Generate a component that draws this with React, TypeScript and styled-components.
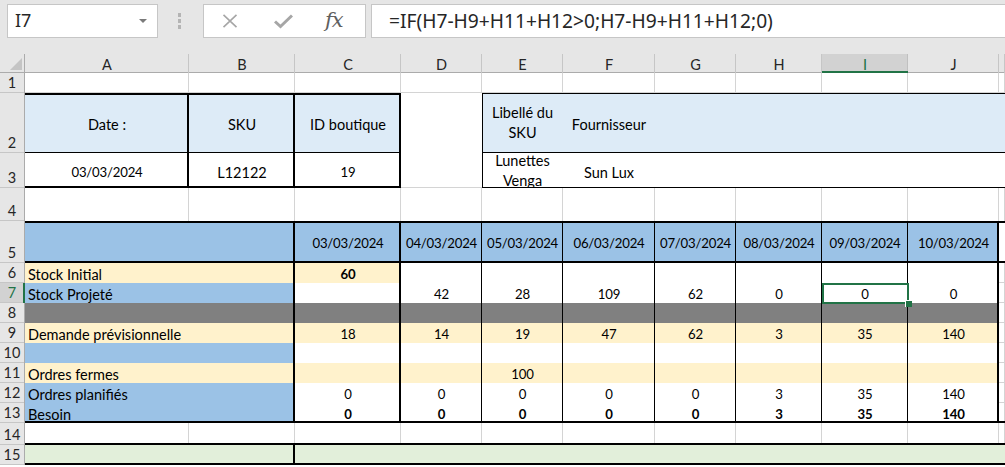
import React from 'react'
import styled, { createGlobalStyle } from 'styled-components'

const GlobalStyle = createGlobalStyle`
  html, body {
    margin: 0;
    padding: 0;
    background: #ffffff;
    overflow: hidden;
  }
  body {
    font-family: Lato, "Liberation Sans", sans-serif;
  }
`

const BLUE = '#9bc2e6'
const PALE = '#ddebf7'
const YELLOW = '#fff2cc'
const GREY = '#808080'
const GREEN = '#e2efda'
const GRID = '#d4d4d4'
const XL = '#217346'

type Edge = 'n' | 'g' | 't' | 'T'

interface Spec {
  span?: number
  text?: string
  fill?: string
  bold?: boolean
  align?: 'left' | 'center'
  wrap?: boolean
  r?: Edge
  b?: Edge
  t?: Edge
  l?: Edge
  sel?: boolean
}

interface RowSpec {
  n: number
  h: number
  cells: Spec[]
}

// inset shadows stand in for excel borders, black ones listed first so they win over gridlines
function edges(s: Spec) {
  const out: string[] = []
  const grid: string[] = []
  const add = (kind: Edge | undefined, fn: (w: number) => string) => {
    if (!kind || kind === 'n') return
    const w = kind === 'T' ? 2 : 1
    const c = kind === 'g' ? GRID : '#000'
    ;(kind === 'g' ? grid : out).push(`${fn(w)} ${c}`)
  }
  add(s.t, w => `inset 0 ${w}px 0`)
  add(s.l, w => `inset ${w}px 0 0`)
  add(s.r, w => `inset -${w}px 0 0`)
  add(s.b, w => `inset 0 -${w}px 0`)
  const all = [...out, ...grid]
  return all.length ? all.join(', ') : 'none'
}

const Bar = styled.div`
  height: 54px;
  box-sizing: border-box;
  background: #e6e6e6;
  display: flex;
  align-items: flex-start;
  padding-top: 4px;
  overflow: hidden;
`

const NameBox = styled.div`
  margin-left: 7px;
  width: 151px;
  height: 34px;
  box-sizing: border-box;
  background: #fff;
  border: 1px solid #c6c6c6;
  display: flex;
  align-items: center;
  justify-content: space-between;
  padding: 0 10px 2px 7px;
  font: 18px "Noto Sans", "Open Sans", sans-serif;
  color: #262626;
`

const Caret = styled.span`
  width: 0;
  height: 0;
  border-left: 4px solid transparent;
  border-right: 4px solid transparent;
  border-top: 4px solid #7a7a7a;
  margin-top: 2px;
`

const Grip = styled.div`
  width: 3px;
  margin: 9px 22px 0 20px;
  display: flex;
  flex-direction: column;
  gap: 2px;
`

const Dot = styled.span`
  width: 3px;
  height: 4px;
  background: #b4b4b4;
`

const FxBox = styled.div`
  width: 163px;
  height: 34px;
  box-sizing: border-box;
  background: #fff;
  border: 1px solid #c6c6c6;
  display: flex;
  align-items: center;
  padding-left: 18px;
  gap: 36px;
`

const Fx = styled.span`
  font: italic 21px "DejaVu Serif", "Liberation Serif", serif;
  color: #606060;
  letter-spacing: -1px;
  margin-left: -4px;
  margin-bottom: 2px;
`

const Formula = styled.div`
  flex: 1;
  margin-left: 5px;
  height: 34px;
  box-sizing: border-box;
  background: #fff;
  border: 1px solid #c6c6c6;
  border-right: none;
  display: flex;
  align-items: center;
  padding: 0 0 2px 17px;
  font: 19.2px "Noto Sans", "Open Sans", sans-serif;
  color: #262626;
  white-space: nowrap;
`

const Sheet = styled.div<{ $rows: string }>`
  display: grid;
  grid-template-columns: 25px 164px 106px 106px 81px 81px 92px 81px 86px 86px 91px 1fr;
  grid-template-rows: ${p => p.$rows};
  font-size: 14.5px;
  color: #000;
`

const Corner = styled.div`
  background: #e6e6e6;
  box-shadow: inset -1px 0 0 #ababab, inset 0 -1px 0 #ababab;
  display: flex;
  align-items: flex-end;
  justify-content: flex-end;
  padding: 0 3px 3px 0;
`

const CornerMark = styled.span`
  width: 0;
  height: 0;
  border-left: 12px solid transparent;
  border-bottom: 12px solid #c4c4c4;
`

const ColHead = styled.div<{ $active?: boolean }>`
  background: ${p => (p.$active ? '#d2d2d2' : '#e6e6e6')};
  box-shadow: ${p =>
    p.$active
      ? `inset 0 -2px 0 ${XL}, inset -1px 0 0 #c0c0c0`
      : 'inset -1px 0 0 #c6c6c6, inset 0 -1px 0 #ababab'};
  color: ${p => (p.$active ? XL : '#262626')};
  display: flex;
  align-items: center;
  justify-content: center;
  padding-top: 1px;
  font-size: 14.5px;
`

const RowHead = styled.div<{ $active?: boolean }>`
  background: ${p => (p.$active ? '#d2d2d2' : '#e6e6e6')};
  box-shadow: ${p =>
    p.$active
      ? `inset -2px 0 0 ${XL}, inset 0 -1px 0 #c6c6c6`
      : 'inset -1px 0 0 #ababab, inset 0 -1px 0 #c6c6c6'};
  color: ${p => (p.$active ? XL : '#262626')};
  display: flex;
  align-items: flex-end;
  justify-content: center;
  line-height: 20px;
  padding-right: 1px;
  font-size: 14.5px;
  overflow: hidden;
`

const Cell = styled.div<{
  $span: number
  $fill: string
  $bold?: boolean
  $align?: 'left' | 'center'
  $wrap?: boolean
  $num?: boolean
  $edges: string
}>`
  grid-column: span ${p => p.$span};
  position: relative;
  background: ${p => p.$fill};
  box-shadow: ${p => p.$edges};
  display: flex;
  align-items: center;
  justify-content: ${p => (p.$align === 'left' ? 'flex-start' : 'center')};
  text-align: center;
  padding: ${p => (p.$wrap ? '0 3px' : '3px 3px 0')};
  font-size: ${p => (p.$num ? '13.2px' : '14.5px')};
  letter-spacing: ${p => (p.$num ? '-0.2px' : '0')};
  font-weight: ${p => (p.$bold ? 700 : 400)};
  white-space: ${p => (p.$wrap ? 'normal' : 'nowrap')};
  line-height: ${p => (p.$wrap ? '20px' : '17px')};
  overflow: ${p => (p.$wrap ? 'hidden' : 'visible')};
  min-width: 0;
`

const Selection = styled.span`
  position: absolute;
  z-index: 2;
  left: 0;
  top: 0;
  right: -1px;
  bottom: -1px;
  border: 2px solid ${XL};
  pointer-events: none;
`

const Handle = styled.span`
  position: absolute;
  right: -5px;
  bottom: -5px;
  width: 6px;
  height: 6px;
  background: ${XL};
  border-left: 1px solid #fff;
  border-top: 1px solid #fff;
`

const letters = ['A', 'B', 'C', 'D', 'E', 'F', 'G', 'H', 'I', 'J', 'K']
const dates = ['03/03/2024', '04/03/2024', '05/03/2024', '06/03/2024', '07/03/2024', '08/03/2024', '09/03/2024', '10/03/2024']

const blankRow = (b: Edge = 'g'): Spec[] => letters.map(() => ({ r: 'g', b }))

// rows 6-13 of the planning block: label over A:B, values C..J, K left plain
function planRow(
  label: string,
  labelFill: string,
  values: string[],
  fills: string[],
  opts: { bold?: boolean; last?: boolean; selAt?: number; boldAt?: number } = {}
): Spec[] {
  const b: Edge = opts.last ? 'T' : 'n'
  const row: Spec[] = [{ span: 2, text: label, fill: labelFill, align: 'left', r: 'T', b }]
  values.forEach((v, i) => {
    row.push({
      text: v,
      fill: fills[i],
      bold: opts.bold || opts.boldAt === i,
      r: i === 0 || i === 7 ? 'T' : 't',
      b,
      sel: opts.selAt === i,
    })
  })
  row.push({ r: 'g', b: opts.last ? 'T' : 'g' })
  return row
}

const all = (c: string) => Array(8).fill(c)

const rows: RowSpec[] = [
  { n: 1, h: 20, cells: blankRow() },
  {
    n: 2,
    h: 60,
    cells: [
      { text: 'Date :', fill: PALE, t: 'T', r: 'T', b: 't' },
      { text: 'SKU', fill: PALE, t: 'T', r: 'T', b: 't' },
      { text: 'ID boutique', fill: PALE, t: 'T', r: 'T', b: 't' },
      { r: 'n', b: 'n' },
      { text: 'Libellé du SKU', fill: PALE, wrap: true, t: 't', l: 't', b: 't' },
      { text: 'Fournisseur', fill: PALE, t: 't', b: 't' },
      { span: 5, fill: PALE, t: 't', b: 't' },
    ],
  },
  {
    n: 3,
    h: 35,
    cells: [
      { text: '03/03/2024', r: 'T', b: 'T' },
      { text: 'L12122', r: 'T', b: 'T' },
      { text: '19', r: 'T', b: 'T' },
      { r: 'n', b: 'g' },
      { text: 'Lunettes Venga', wrap: true, l: 't', b: 't' },
      { text: 'Sun Lux', b: 't' },
      { span: 5, b: 't' },
    ],
  },
  { n: 4, h: 33, cells: blankRow('n') },
  {
    n: 5,
    h: 42,
    cells: [
      { span: 2, fill: BLUE, t: 'T', b: 'T', r: 'T' },
      ...dates.map<Spec>((d, i) => ({ text: d, fill: BLUE, t: 'T', b: 'T', r: i === 0 || i === 7 ? 'T' : 't' })),
      { t: 'T', b: 'T' },
    ],
  },
  {
    n: 6,
    h: 20,
    cells: planRow('Stock Initial', YELLOW, ['60', '', '', '', '', '', '', ''], [YELLOW, ...all('#fff').slice(1)], { boldAt: 0 }),
  },
  {
    n: 7,
    h: 20,
    cells: planRow('Stock Projeté', BLUE, ['', '42', '28', '109', '62', '0', '0', '0'], all('#fff'), { selAt: 6 }),
  },
  { n: 8, h: 20, cells: planRow('', GREY, all(''), all(GREY)) },
  {
    n: 9,
    h: 20,
    cells: planRow('Demande prévisionnelle', YELLOW, ['18', '14', '19', '47', '62', '3', '35', '140'], all(YELLOW)),
  },
  { n: 10, h: 20, cells: planRow('', BLUE, all(''), all('#fff')) },
  {
    n: 11,
    h: 20,
    cells: planRow('Ordres fermes', YELLOW, ['', '', '100', '', '', '', '', ''], all(YELLOW)),
  },
  {
    n: 12,
    h: 20,
    cells: planRow('Ordres planifiés', BLUE, ['0', '0', '0', '0', '0', '3', '35', '140'], all('#fff')),
  },
  {
    n: 13,
    h: 20,
    cells: planRow('Besoin', BLUE, ['0', '0', '0', '0', '0', '3', '35', '140'], all('#fff'), { bold: true, last: true }),
  },
  { n: 14, h: 22, cells: blankRow('T') },
  {
    n: 15,
    h: 20,
    cells: [
      { span: 2, fill: GREEN, r: 'T', b: 'T' },
      { span: 9, fill: GREEN, b: 'T' },
    ],
  },
]

const isNum = (t?: string) => !!t && /^[\d/]+$/.test(t)

function CrossIcon() {
  return (
    <svg width="16" height="14" viewBox="0 0 16 14">
      <path d="M1.5 0.8 L14.5 13.2 M14.5 0.8 L1.5 13.2" stroke="#a6a6a6" strokeWidth="1.6" fill="none" />
    </svg>
  )
}

function CheckIcon() {
  return (
    <svg width="19" height="15" viewBox="0 0 19 15">
      <path d="M1 7.5 L6.5 12.5 L18 1.5" stroke="#a6a6a6" strokeWidth="3" fill="none" />
    </svg>
  )
}

export default function App() {
  return (
    <>
      <GlobalStyle />
      <Bar>
        <NameBox>
          <span>I7</span>
          <Caret />
        </NameBox>
        <Grip>
          <Dot />
          <Dot />
          <Dot />
        </Grip>
        <FxBox>
          <CrossIcon />
          <CheckIcon />
          <Fx>fx</Fx>
        </FxBox>
        <Formula>=IF(H7-H9+H11+H12&gt;0;H7-H9+H11+H12;0)</Formula>
      </Bar>
      <Sheet $rows={`19px ${rows.map(r => r.h + 'px').join(' ')} 1fr`}>
        <Corner>
          <CornerMark />
        </Corner>
        {letters.map(l => (
          <ColHead key={l} $active={l === 'I'}>
            {l === 'K' ? '' : l}
          </ColHead>
        ))}
        {rows.map(row => (
          <React.Fragment key={row.n}>
            <RowHead $active={row.n === 7}>{row.n}</RowHead>
            {row.cells.map((c, i) => (
              <Cell
                key={i}
                $span={c.span ?? 1}
                $fill={c.fill ?? '#fff'}
                $bold={c.bold}
                $align={c.align}
                $wrap={c.wrap}
                $num={isNum(c.text)}
                $edges={edges(c)}
              >
                {c.text}
                {c.sel && (
                  <Selection>
                    <Handle />
                  </Selection>
                )}
              </Cell>
            ))}
          </React.Fragment>
        ))}
      </Sheet>
    </>
  )
}
